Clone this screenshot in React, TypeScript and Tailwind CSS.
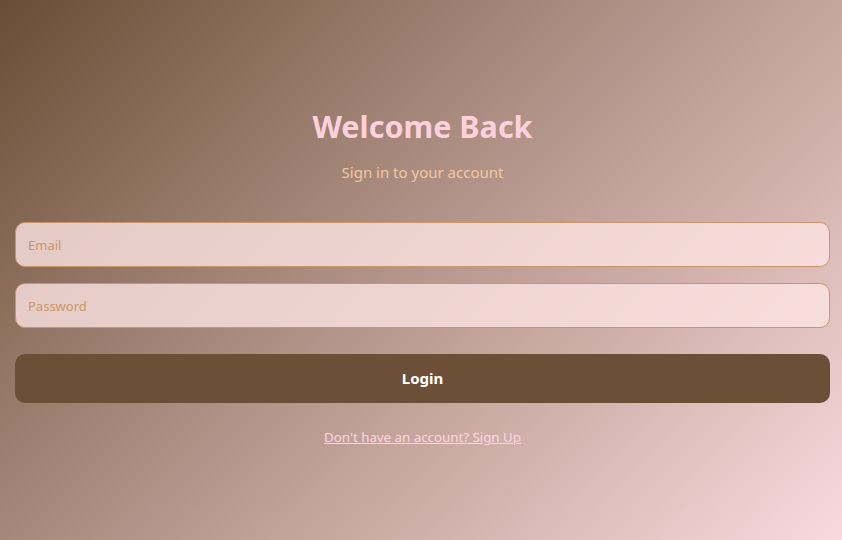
export default function App() {
  return (
    <div
      className="min-h-[540px] w-full bg-[linear-gradient(135deg,#6b4c35_0%,#a08274_35%,#d2b1ac_70%,#f9d9dd_100%)] flex flex-col items-stretch pl-[15px] pr-[12px] pt-[106px]"
      style={{ fontFamily: '"Noto Sans", "Open Sans", sans-serif' }}
    >
      <h1 className="text-center text-[30.5px] leading-[40px] font-bold text-[#ffd1dc]">Welcome Back</h1>
      <p className="mt-[14px] text-center text-[15px] leading-[24px] text-[#f2c9a2]">Sign in to your account</p>

      <form className="mt-[38px] flex flex-col" onSubmit={(e) => e.preventDefault()}>
        <input
          type="email"
          placeholder="Email"
          className="h-[45px] w-full rounded-[10px] border border-[#c9966b] bg-[#fde4e2]/80 px-[12px] text-[13px] text-[#6d4f38] placeholder:text-[#c9966b] outline-none"
        />
        <input
          type="password"
          placeholder="Password"
          className="mt-[16px] h-[45px] w-full rounded-[10px] border border-[#c9966b] bg-[#fde4e2]/80 px-[12px] text-[13px] text-[#6d4f38] placeholder:text-[#c9966b] outline-none"
        />
        <button
          type="submit"
          className="mt-[26px] h-[49px] w-full rounded-[10px] bg-[#6d4f38] text-[15px] font-bold text-white"
        >
          Login
        </button>
      </form>

      <a href="#" className="mt-[24px] self-center text-[13.3px] leading-[20px] text-[#ffd6e0] underline">
        Don't have an account? Sign Up
      </a>
    </div>
  )
}
